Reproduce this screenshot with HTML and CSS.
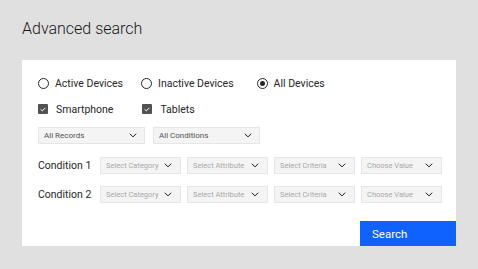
FILE: index.html
```html
<!DOCTYPE html>
<html>
<head>
<meta charset="utf-8">
<link rel="stylesheet" href="styles.css">
</head>
<body>
<h1 class="title">Advanced search</h1>
<div class="card">
  <div class="radio-row">
    <label class="radio"><span class="circle"></span>Active Devices</label>
    <label class="radio"><span class="circle"></span>Inactive Devices</label>
    <label class="radio"><span class="circle checked"></span>All Devices</label>
  </div>
  <div class="check-row">
    <label class="check"><span class="box"><svg width="6" height="5" viewBox="0 0 6 5"><path d="M0.7 2.4 L2.3 3.9 L5.3 0.9" fill="none" stroke="#fff" stroke-width="1"/></svg></span>Smartphone</label>
    <label class="check"><span class="box"><svg width="6" height="5" viewBox="0 0 6 5"><path d="M0.7 2.4 L2.3 3.9 L5.3 0.9" fill="none" stroke="#fff" stroke-width="1"/></svg></span>Tablets</label>
  </div>
  <div class="select-row">
    <div class="select wide"><span>All Records</span><svg class="chev" width="8" height="5" viewBox="0 0 8 5"><path d="M0.8 0.7 L4 3.9 L7.2 0.7" fill="none" stroke="#161616" stroke-width="1"/></svg></div>
    <div class="select wide"><span>All Conditions</span><svg class="chev" width="8" height="5" viewBox="0 0 8 5"><path d="M0.8 0.7 L4 3.9 L7.2 0.7" fill="none" stroke="#161616" stroke-width="1"/></svg></div>
  </div>
  <div class="cond-row">
    <span class="cond-label">Condition 1</span>
    <div class="select ph"><span>Select Category</span><svg class="chev" width="8" height="5" viewBox="0 0 8 5"><path d="M0.8 0.7 L4 3.9 L7.2 0.7" fill="none" stroke="#161616" stroke-width="1"/></svg></div>
    <div class="select ph"><span>Select Attribute</span><svg class="chev" width="8" height="5" viewBox="0 0 8 5"><path d="M0.8 0.7 L4 3.9 L7.2 0.7" fill="none" stroke="#161616" stroke-width="1"/></svg></div>
    <div class="select ph"><span>Select Criteria</span><svg class="chev" width="8" height="5" viewBox="0 0 8 5"><path d="M0.8 0.7 L4 3.9 L7.2 0.7" fill="none" stroke="#161616" stroke-width="1"/></svg></div>
    <div class="select ph"><span>Choose Value</span><svg class="chev" width="8" height="5" viewBox="0 0 8 5"><path d="M0.8 0.7 L4 3.9 L7.2 0.7" fill="none" stroke="#161616" stroke-width="1"/></svg></div>
  </div>
  <div class="cond-row">
    <span class="cond-label">Condition 2</span>
    <div class="select ph"><span>Select Category</span><svg class="chev" width="8" height="5" viewBox="0 0 8 5"><path d="M0.8 0.7 L4 3.9 L7.2 0.7" fill="none" stroke="#161616" stroke-width="1"/></svg></div>
    <div class="select ph"><span>Select Attribute</span><svg class="chev" width="8" height="5" viewBox="0 0 8 5"><path d="M0.8 0.7 L4 3.9 L7.2 0.7" fill="none" stroke="#161616" stroke-width="1"/></svg></div>
    <div class="select ph"><span>Select Criteria</span><svg class="chev" width="8" height="5" viewBox="0 0 8 5"><path d="M0.8 0.7 L4 3.9 L7.2 0.7" fill="none" stroke="#161616" stroke-width="1"/></svg></div>
    <div class="select ph"><span>Choose Value</span><svg class="chev" width="8" height="5" viewBox="0 0 8 5"><path d="M0.8 0.7 L4 3.9 L7.2 0.7" fill="none" stroke="#161616" stroke-width="1"/></svg></div>
  </div>
  <div class="btn-row">
    <button class="search-btn">Search</button>
  </div>
</div>
</body>
</html>
```
FILE: styles.css
```css
* { box-sizing: border-box; }
html, body { margin: 0; padding: 0; }
body {
  background: #e0e0e0;
  width: 478px;
  height: 269px;
  overflow: hidden;
  font-family: Roboto, "Liberation Sans", sans-serif;
  color: #161616;
}
.title {
  margin: 0;
  padding: 18px 0 0 22px;
  height: 60px;
  font-family: Roboto, "Liberation Sans", sans-serif;
  font-weight: 300;
  font-size: 16px;
  line-height: 22px;
  color: #161616;
}
.card {
  margin-left: 22px;
  width: 434px;
  height: 186px;
  background: #fff;
  padding: 15px 0 0 16px;
  display: flex;
  flex-direction: column;
}
.radio-row, .check-row {
  display: flex;
  align-items: center;
  height: 16px;
  font-size: 10.5px;
  color: #262626;
}
.radio-row { gap: 18px; }
.check-row { margin-top: 10px; gap: 29px; }
.radio, .check {
  display: flex;
  align-items: center;
  gap: 6px;
}
.circle {
  width: 11px;
  height: 11px;
  border: 1px solid #262626;
  border-radius: 50%;
  display: flex;
  align-items: center;
  justify-content: center;
}
.circle.checked::after {
  content: "";
  width: 5px;
  height: 5px;
  border-radius: 50%;
  background: #262626;
}
.radio:nth-child(2) { margin-right: 5px; }
.check { gap: 8px; }
.box {
  width: 10px;
  height: 10px;
  background: #525252;
  border-radius: 1px;
  display: flex;
  align-items: center;
  justify-content: center;
}
.select-row {
  display: flex;
  gap: 8px;
  margin-top: 10px;
}
.select {
  height: 17px;
  background: #f4f4f4;
  border: 1px solid #e6e6e6;
  display: flex;
  align-items: center;
  justify-content: space-between;
  padding: 0 7px 0 5px;
  font-family: Roboto, "Liberation Sans", sans-serif;
  font-size: 8px;
  color: #525252;
  white-space: nowrap;
}
.select.wide { width: 107px; }
.select.ph { width: 81px; color: #a8a8a8; font-size: 7.5px; padding-right: 8px; }
.chev { flex: none; }
.cond-row {
  display: flex;
  align-items: center;
  gap: 6px;
  height: 17px;
}
.select-row + .cond-row { margin-top: 13px; }
.cond-row + .cond-row { margin-top: 12px; }
.cond-label {
  width: 56px;
  font-size: 10.5px;
  color: #262626;
  white-space: nowrap;
}
.btn-row {
  margin-top: auto;
  display: flex;
  justify-content: flex-end;
}
.search-btn {
  width: 96px;
  height: 25px;
  background: #0f62fe;
  border: none;
  color: #fff;
  text-align: left;
  padding: 0 0 0 12px;
  font-family: Roboto, "Liberation Sans", sans-serif;
  font-size: 11.5px;
}
```
